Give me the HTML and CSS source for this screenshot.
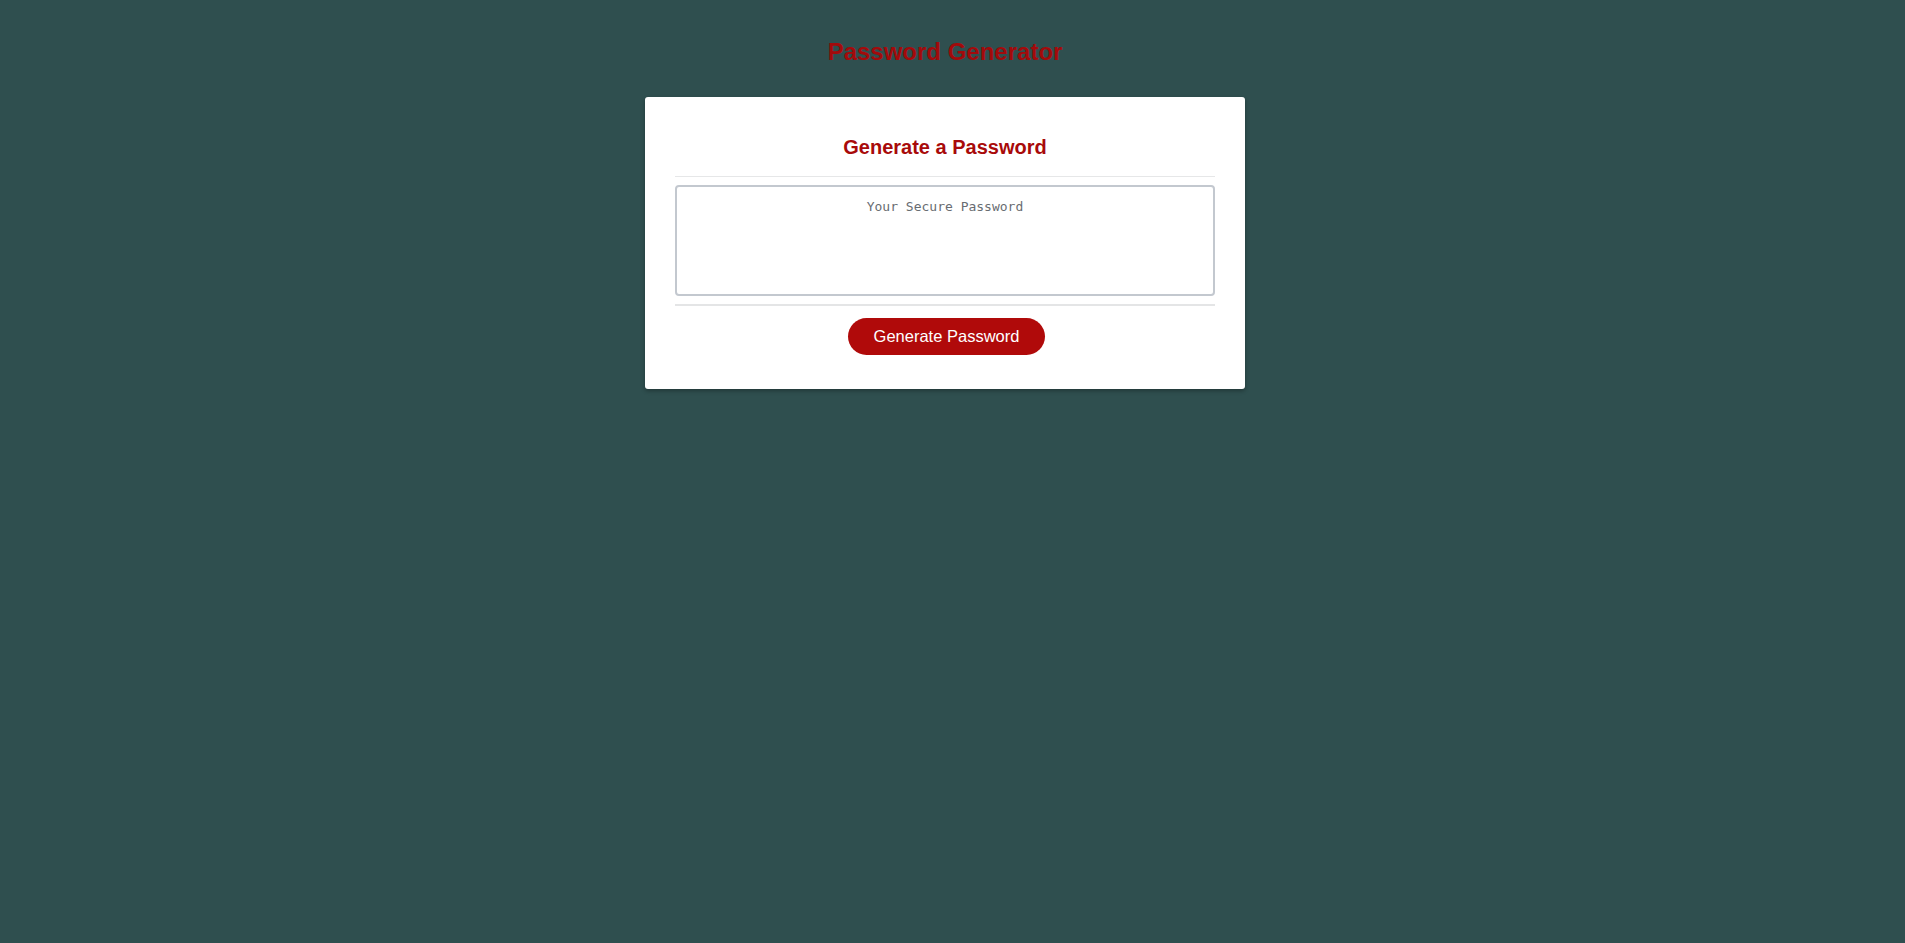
FILE: index.html
```html
<!DOCTYPE html>
<html lang="en">
<head>
<meta charset="UTF-8">
<title>Password Generator</title>
<link rel="stylesheet" href="styles.css">
</head>
<body>
<div class="page">
  <header class="site-header">
    <h1 class="site-title">Password Generator</h1>
  </header>
  <main class="card">
    <div class="card-header">
      <h2 class="card-title">Generate a Password</h2>
    </div>
    <div class="card-body">
      <textarea class="password-box" readonly placeholder="Your Secure Password" aria-label="Generated Password"></textarea>
    </div>
    <div class="card-footer">
      <button class="btn" type="button">Generate Password</button>
    </div>
  </main>
</div>
</body>
</html>
```
FILE: styles.css
```css
html, body {
  margin: 0;
  padding: 0;
  background-color: #2f4f4f;
  font-family: "Liberation Sans", Arial, sans-serif;
}

.page {
  padding-right: 15px;
  min-height: 943px;
  box-sizing: border-box;
}

.site-header {
  text-align: center;
  padding-top: 38px;
}

.site-title {
  margin: 0;
  font-size: 24px;
  line-height: 28px;
  font-weight: bold;
  color: #a30a0b;
}

.card {
  display: block;
  width: 600px;
  box-sizing: border-box;
  margin: 31px auto 0;
  padding: 39px 30px 34px;
  background: #ffffff;
  border-radius: 3px;
  box-shadow: 0 2px 4px rgba(0, 0, 0, 0.3);
}

.card-header {
  padding-bottom: 17px;
  border-bottom: 1px solid #e6e7e8;
}

.card-title {
  margin: 0;
  text-align: center;
  font-size: 20px;
  line-height: 23px;
  font-weight: bold;
  color: #a80a0a;
}

.card-body {
  padding-top: 8px;
}

.password-box {
  display: block;
  width: 100%;
  height: 111px;
  box-sizing: border-box;
  margin: 0;
  padding: 12px 12px 10px;
  border: 2px solid #c3c8cf;
  border-radius: 4px;
  resize: none;
  overflow: hidden;
  outline: none;
  background: #ffffff;
  font-family: "DejaVu Sans Mono", "Liberation Mono", monospace;
  font-size: 13px;
  line-height: 15px;
  text-align: center;
  color: #333333;
}

.password-box::placeholder {
  color: #686c71;
  opacity: 1;
}

.card-footer {
  margin-top: 8px;
  border-top: 2px solid #e4e5e6;
  padding-top: 12px;
  display: flex;
  justify-content: center;
}

.btn {
  height: 37px;
  margin-left: 3px;
  padding: 0 26px;
  border: none;
  border-radius: 19px;
  background-color: #b00a0a;
  color: #ffffff;
  font-family: "Liberation Sans", Arial, sans-serif;
  font-size: 16.5px;
  line-height: 37px;
  cursor: pointer;
}
```
